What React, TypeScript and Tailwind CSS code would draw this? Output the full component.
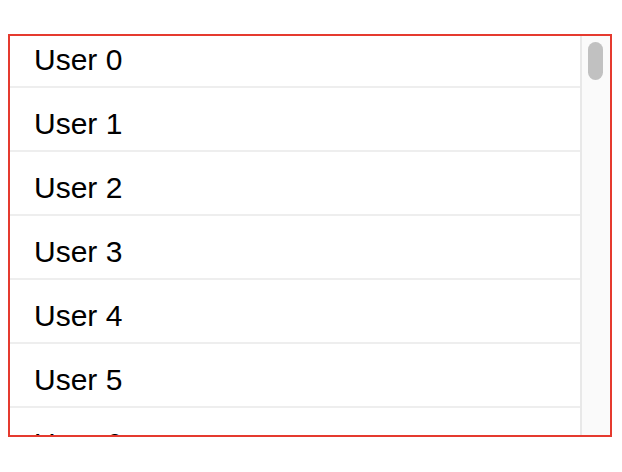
import { useEffect, useRef } from 'react';

const users = Array.from({ length: 54 }, (_, i) => `User ${i}`);

export default function App() {
    const listRef = useRef<HTMLDivElement>(null);

    useEffect(() => {
        // the list in the shot is scrolled a little past the top
        if (listRef.current) listRef.current.scrollTop = 12;
    }, []);

    return (
        <div className="pt-[34px] pl-[8px] bg-white min-h-screen" style={{ fontFamily: '"Liberation Sans", Arial, sans-serif' }}>
            <div className="w-[604px] h-[403px] border-2 border-[#e53a2f] flex">
                <div ref={listRef} className="flex-1 overflow-hidden">
                    {users.map((name) => (
                        <div key={name} className="h-[64px] border-b-2 border-[#eeeeee] pl-[24px] pt-[21px]">
                            <span className="block text-[30px] leading-none text-black">{name}</span>
                        </div>
                    ))}
                </div>
                {/* scrollbar */}
                <div className="w-[30px] shrink-0 border-l-2 border-[#e8e8e8] bg-[#fafafa] pt-[6px] pl-[6px]">
                    <div className="w-[15px] h-[38px] rounded-full bg-[#c1c1c1]" />
                </div>
            </div>
        </div>
    );
}
